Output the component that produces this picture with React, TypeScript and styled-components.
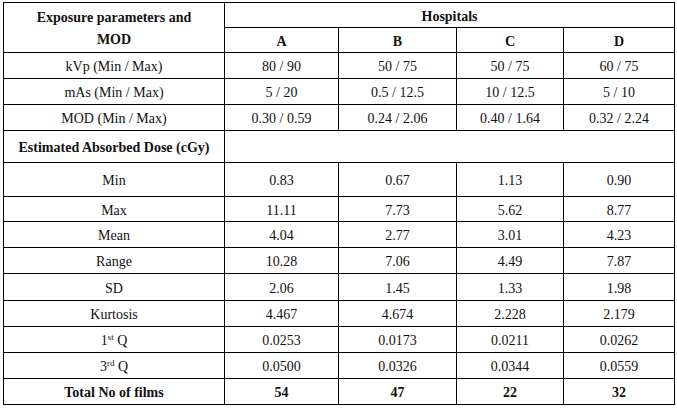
import styled, { createGlobalStyle } from "styled-components";

const GlobalStyle = createGlobalStyle`
  html, body {
    margin: 0;
    padding: 0;
    background: #fff;
  }
`;

const Page = styled.div`
  padding: 2px 0 0 3px;
`;

const Table = styled.table`
  border-collapse: collapse;
  table-layout: fixed;
  width: 672px;
  font-family: "Liberation Serif", "Times New Roman", serif;
  font-size: 14px;
  color: #111;
  border: 1px solid #000;
`;

const Cell = styled.td<{ $bold?: boolean; $h?: number }>`
  border: 1px solid #000;
  padding: 3px 4px 0;
  text-align: center;
  vertical-align: middle;
  font-weight: ${(p) => (p.$bold ? "bold" : "normal")};
  height: ${(p) => (p.$h ? `${p.$h - 4}px` : "auto")};
  line-height: 16px;
  white-space: nowrap;
`;

const HeadCell = styled(Cell)`
  white-space: normal;
  line-height: 22px;
`;

const Sup = styled.sup`
  font-size: 9px;
  line-height: 0;
  vertical-align: 5px;
`;

const colWidths = [221, 114, 118, 107, 111];

type Row = {
  label: React.ReactNode;
  values: string[];
  h: number;
  bold?: boolean;
};

const exposureRows: Row[] = [
  { label: "kVp (Min / Max)", values: ["80 / 90", "50 / 75", "50 / 75", "60 / 75"], h: 26 },
  { label: "mAs (Min / Max)", values: ["5 / 20", "0.5 / 12.5", "10 / 12.5", "5 / 10"], h: 26 },
  { label: "MOD (Min / Max)", values: ["0.30 / 0.59", "0.24 / 2.06", "0.40 / 1.64", "0.32 / 2.24"], h: 26 },
];

const doseRows: Row[] = [
  { label: "Min", values: ["0.83", "0.67", "1.13", "0.90"], h: 34 },
  { label: "Max", values: ["11.11", "7.73", "5.62", "8.77"], h: 25 },
  { label: "Mean", values: ["4.04", "2.77", "3.01", "4.23"], h: 26 },
  { label: "Range", values: ["10.28", "7.06", "4.49", "7.87"], h: 26 },
  { label: "SD", values: ["2.06", "1.45", "1.33", "1.98"], h: 27 },
  { label: "Kurtosis", values: ["4.467", "4.674", "2.228", "2.179"], h: 26 },
  {
    label: (
      <>
        1<Sup>st</Sup> Q
      </>
    ),
    values: ["0.0253", "0.0173", "0.0211", "0.0262"],
    h: 26,
  },
  {
    label: (
      <>
        3<Sup>rd</Sup> Q
      </>
    ),
    values: ["0.0500", "0.0326", "0.0344", "0.0559"],
    h: 26,
  },
  { label: "Total No of films", values: ["54", "47", "22", "32"], h: 26, bold: true },
];

function DataRow({ row }: { row: Row }) {
  return (
    <tr>
      <Cell $h={row.h} $bold={row.bold}>
        {row.label}
      </Cell>
      {row.values.map((v, i) => (
        <Cell key={i} $bold={row.bold}>
          {v}
        </Cell>
      ))}
    </tr>
  );
}

export default function App() {
  return (
    <>
      <GlobalStyle />
      <Page>
        <Table>
          <colgroup>
            {colWidths.map((w, i) => (
              <col key={i} style={{ width: w }} />
            ))}
          </colgroup>
          <tbody>
            <tr>
              <HeadCell rowSpan={2} $bold>
                Exposure parameters and
                <br />
                MOD
              </HeadCell>
              <Cell colSpan={4} $bold $h={25}>
                Hospitals
              </Cell>
            </tr>
            <tr>
              {["A", "B", "C", "D"].map((h) => (
                <Cell key={h} $bold $h={25}>
                  {h}
                </Cell>
              ))}
            </tr>
            {exposureRows.map((r, i) => (
              <DataRow key={i} row={r} />
            ))}
            <tr>
              <Cell $bold $h={32}>
                Estimated Absorbed Dose (cGy)
              </Cell>
              <Cell colSpan={4} />
            </tr>
            {doseRows.map((r, i) => (
              <DataRow key={i} row={r} />
            ))}
          </tbody>
        </Table>
      </Page>
    </>
  );
}
